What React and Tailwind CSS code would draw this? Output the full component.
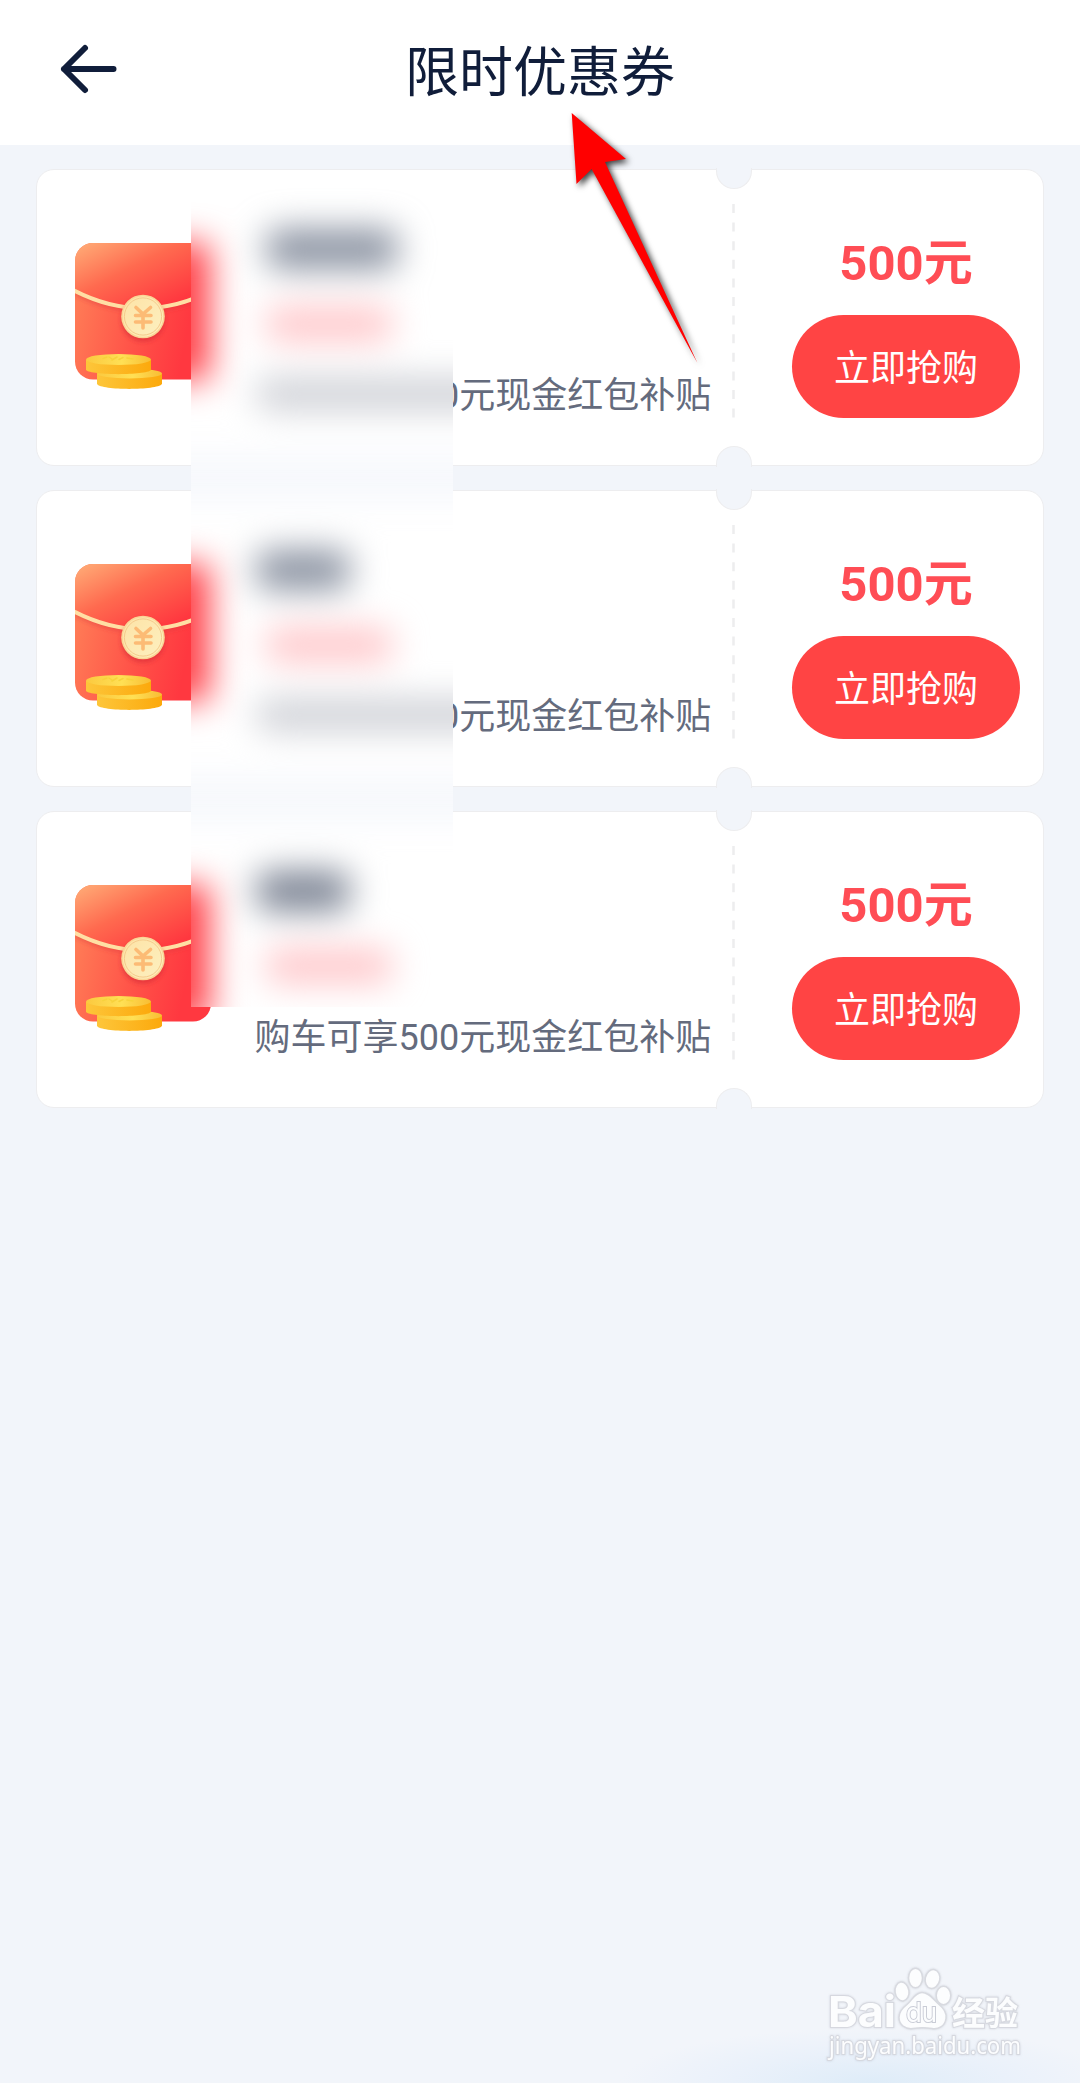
const coupons = [
  { id: 1, price: '500元', desc: '购车可享500元现金红包补贴' },
  { id: 2, price: '500元', desc: '购车可享500元现金红包补贴' },
  { id: 3, price: '500元', desc: '购车可享500元现金红包补贴' },
]

function BackIcon() {
  return (
    <svg width="60" height="54" viewBox="0 0 60 54" fill="none" stroke="#101d3a" strokeWidth="6" strokeLinecap="round" strokeLinejoin="round">
      <path d="M54.5 27H5M26 6L5 27l21 21" />
    </svg>
  )
}

function RedPacket() {
  return (
    <svg width="136" height="148" viewBox="0 0 136 148" className="shrink-0">
      <defs>
        <linearGradient id="body" x1="0" y1="0.1" x2="1" y2="0.3">
          <stop offset="0" stopColor="#ff8158" />
          <stop offset="0.5" stopColor="#ff5549" />
          <stop offset="0.9" stopColor="#ff3840" />
        </linearGradient>
        <linearGradient id="flap" x1="0" y1="0.1" x2="0.8" y2="0.85">
          <stop offset="0" stopColor="#ffa673" />
          <stop offset="0.45" stopColor="#ff6a4f" />
          <stop offset="1" stopColor="#ff373f" />
        </linearGradient>
        <linearGradient id="gold" x1="0" y1="0" x2="1" y2="0">
          <stop offset="0" stopColor="#fdc63a" />
          <stop offset="1" stopColor="#fca90c" />
        </linearGradient>
        <linearGradient id="goldTop" x1="0" y1="0" x2="1" y2="0">
          <stop offset="0" stopColor="#fbc93f" />
          <stop offset="0.55" stopColor="#ffe055" />
          <stop offset="1" stopColor="#f8bd33" />
        </linearGradient>
        <linearGradient id="seal" x1="0" y1="0" x2="1" y2="1">
          <stop offset="0" stopColor="#fde3a6" />
          <stop offset="1" stopColor="#fdf0c0" />
        </linearGradient>
        <clipPath id="card"><rect width="136" height="136.5" rx="18" /></clipPath>
        <filter id="soft" x="-30%" y="-30%" width="160%" height="160%"><feGaussianBlur stdDeviation="2" /></filter>
      </defs>
      <g clipPath="url(#card)">
        <rect width="136" height="137" fill="url(#body)" />
        <path d="M0 50Q68 85 136 50" fill="none" stroke="#d9303a" strokeOpacity="0.45" strokeWidth="4" filter="url(#soft)" />
        <path d="M0 0H136V48Q68 82 0 48Z" fill="url(#flap)" />
        <path d="M-1 47.500Q68 83 137 47.500" fill="none" stroke="#ffdfa4" strokeWidth="4" />
        <circle cx="68" cy="77" r="22" fill="#d62c34" fillOpacity="0.55" filter="url(#soft)" />
      </g>
      <circle cx="68" cy="73.500" r="21.800" fill="#fbd596" />
      <circle cx="68" cy="73.500" r="20.200" fill="url(#seal)" />
      <circle cx="68" cy="73.500" r="18.600" fill="none" stroke="#f5cb8c" strokeWidth="1" />
      <path d="M61 64.500L68 71L75.500 64.500M60.500 72.500H76M60.500 79H76M68 71V85" fill="none" stroke="#fcbb75" strokeWidth="3.600" strokeLinecap="round" />
      {/* coins */}
      <path d="M22 130.500V141C26 147.500 82 147.500 87 141V130.500Z" fill="url(#gold)" />
      <ellipse cx="54.500" cy="130.500" rx="32.500" ry="5" fill="url(#goldTop)" />
      <path d="M11 117V127C16 132.500 71 132.500 76 127V117Z" fill="url(#gold)" />
      <ellipse cx="43.500" cy="116.500" rx="32.500" ry="5.500" fill="url(#goldTop)" />
      <path d="M28 115.500l4-1.500M37 117l5-3M44 116.500l4-2M52 115l6 1M34 114l3 2" stroke="#f7d23c" strokeWidth="1.500" strokeLinecap="round" />
    </svg>
  )
}

function Coupon({ coupon }) {
  return (
    <div className="relative flex h-[297px] rounded-[18px] border-[1.5px] border-[#ededef] bg-white">
      <div className="flex w-[696px] pt-[73px] pl-[38px]">
        <RedPacket />
        <div className="flex h-[174px] flex-col justify-end pl-[43.5px]">
          <p className="text-[36px] leading-[42px] whitespace-nowrap text-[#646b7d]">{coupon.desc}</p>
        </div>
      </div>
      <svg width="3" height="215" viewBox="0 0 3 215" className="mt-[34px] -ml-[1px]">
        <path d="M1.500 0V215" stroke="#ededee" strokeWidth="2.500" strokeDasharray="9 9.600" />
      </svg>
      <div className="flex flex-1 flex-col items-end pr-[23px]">
        <div className="mt-[60px] w-[228px] text-center text-[49px] leading-[68px] font-bold text-[#ff4d55]">{coupon.price}</div>
        <button className="mt-[17px] h-[103px] w-[228px] rounded-full bg-[#ff4444] pt-[5px] text-[36px] text-white">立即抢购</button>
      </div>
      <span className="absolute -top-[2px] left-[679px] h-[21px] w-[36px] rounded-b-full border-[1.5px] border-t-0 border-[#ededef] bg-[#f2f5fa]" />
      <span className="absolute -bottom-[2px] left-[679px] h-[21px] w-[36px] rounded-t-full border-[1.5px] border-b-0 border-[#ededef] bg-[#f2f5fa]" />
    </div>
  )
}

// Smudge that hides the private part of the list
function Smudge() {
  return (
    <svg width="262" height="834" viewBox="191 173 262 834" className="absolute top-[173px] left-[191px]">
      <defs>
        <filter id="smudge" x="-200" y="-200" width="1200" height="1600" filterUnits="userSpaceOnUse" colorInterpolationFilters="sRGB">
          <feGaussianBlur stdDeviation="17" />
        </filter>
      </defs>
      <rect x="191" y="173" width="262" height="834" fill="#fff" />
      <g filter="url(#smudge)">
        <rect x="100" y="455" width="450" height="46" fill="#f6f8fc" />
        <rect x="100" y="776" width="450" height="46" fill="#f6f8fc" />
        {[0, 321, 642].map(y => (
          <g key={y}>
            <rect x="140" y={243 + y} width="70" height="137" fill="#ff4048" />
            <rect x={y ? 256 : 266} y={229 + y} width={y ? 94 : 132} height="40" rx="14" fill={y === 642 ? '#7b8393' : '#8a92a1'} />
            <rect x="266" y={307 + y} width="126" height="34" rx="12" fill="#ffc6c9" />
            {y < 642 && <rect x="257" y={378 + y} width="260" height="32" rx="10" fill="#cdcfd5" />}
          </g>
        ))}
      </g>
    </svg>
  )
}

function PointerArrow() {
  return (
    <svg width="160" height="280" viewBox="560 100 160 280" className="absolute top-[100px] left-[560px] drop-shadow-[3px_3px_3px_rgba(0,0,0,0.75)]">
      <path d="M571.700 113L626 159L605 162L697.400 363L591.600 169L576.500 184Z" fill="#ff0000" />
    </svg>
  )
}

function Watermark() {
  return (
    <svg width="210" height="110" viewBox="820 1960 210 110" className="absolute top-[1960px] left-[820px] drop-shadow-[0_0_1px_rgba(120,125,140,0.25)]">
      <g fill="#fcfdfe" stroke="#d8dae0" strokeWidth="1.500">
        <ellipse cx="902" cy="1991.500" rx="7" ry="9.500" transform="rotate(-8 902 1991.500)" />
        <ellipse cx="915.500" cy="1978" rx="7" ry="9.700" />
        <ellipse cx="932.500" cy="1979" rx="7.300" ry="9.500" transform="rotate(12 932.500 1979)" />
        <ellipse cx="943.500" cy="1995.500" rx="7.300" ry="9.300" />
        <path d="M922 1992.500c8 0 12 8 17 12c5 4 8 8 7 14c-1 8-8 11-14 10c-7-1-12-1-19 0c-8 1-14-4-14-11c0-6 4-10 8-13c5-4 8-12 15-12z" />
      </g>
      <g fill="#fcfdfe" stroke="#d6d8df" strokeWidth="2" paintOrder="stroke" fontWeight="700">
        <text x="828" y="2027" fontSize="43" textLength="68" lengthAdjust="spacingAndGlyphs" fontFamily="Inter, sans-serif">Bai</text>
        <text x="952" y="2025" fontSize="33" fontFamily="'Noto Sans CJK SC', sans-serif">经验</text>
        <text x="906" y="2022" fontSize="27" fontWeight="400" textLength="31" lengthAdjust="spacingAndGlyphs" stroke="#c9ccd6" fontFamily="Inter, sans-serif">du</text>
        <text x="829" y="2054" fontSize="23" fontWeight="400" textLength="192" lengthAdjust="spacingAndGlyphs" fontFamily="'Noto Sans', sans-serif">jingyan.baidu.com</text>
      </g>
    </svg>
  )
}

export default function App() {
  return (
    <div className="relative h-[2083px] w-[1080px] overflow-hidden bg-[#f2f5fa] font-[Roboto,'Noto_Sans_CJK_SC',sans-serif]">
      <header className="grid h-[145px] grid-cols-[1fr_auto_1fr] items-center bg-white pb-[7px]">
        <button className="ml-[59px] w-[60px]" aria-label="返回"><BackIcon /></button>
        <h1 className="pt-[9px] text-[54px] leading-[70px] text-[#101d3a]">限时优惠券</h1>
      </header>

      <main className="flex flex-col gap-[24px] px-[36px] pt-[24px]">
        {coupons.map(c => <Coupon key={c.id} coupon={c} />)}
      </main>

      <div className="absolute -bottom-[55px] left-[620px] h-[110px] w-[500px] bg-[radial-gradient(closest-side,#deecf8,#eaf1fa_55%,#f2f5fa)]" />

      <Smudge />
      <PointerArrow />
      <Watermark />
    </div>
  )
}
